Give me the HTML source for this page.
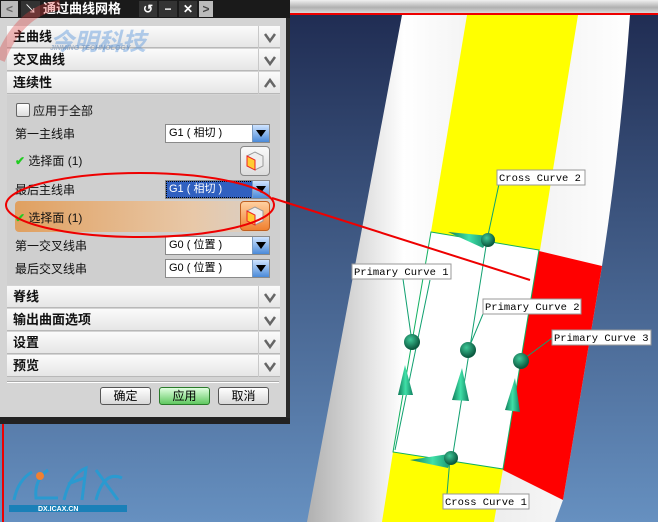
<!DOCTYPE html>
<html><head><meta charset="utf-8"><style>
*{margin:0;padding:0;box-sizing:border-box}
body{width:658px;height:522px;overflow:hidden;position:relative;font-family:"Liberation Sans","Noto Sans CJK SC",sans-serif;font-size:12px;background:#2a3a66}
.abs{position:absolute}
.hdr{position:absolute;left:7px;width:273px;height:22px;background:linear-gradient(#fbfbfb,#e6e6e6);border-bottom:1px solid #b8b8b8;font-weight:bold;font-size:13px;line-height:22px;padding-left:6px;color:#111}
.hdr .chev{position:absolute;right:0;top:0;width:22px;height:22px;border-left:1px solid #c8c8c8}
.lbl{position:absolute;left:15px;font-size:12px;color:#111}
.dd{position:absolute;left:165px;width:105px;height:19px;background:#fff;border:1px solid #8a8a8a;font-size:11px;line-height:17px;padding-left:3px}
.dd .ar{position:absolute;right:0;top:0;width:17px;height:17px;background:linear-gradient(#cfe4ff,#4a8ad8);border-left:1px solid #7a9ac0}
.dd .ar:after{content:"";position:absolute;left:3px;top:5px;border-left:5px solid transparent;border-right:5px solid transparent;border-top:7px solid #000}
.ib{position:absolute;left:240px;width:30px;height:30px;border:1px solid #888;border-radius:4px;background:linear-gradient(#fafafa,#dcdcdc)}
.btn{position:absolute;top:387px;width:51px;height:18px;border:1px solid #555;border-radius:3px;background:linear-gradient(#fff,#d8d8d8);text-align:center;line-height:16px;font-size:12px}
</style></head><body>
<svg class="abs" style="left:0;top:0" width="658" height="522">
<defs>
<linearGradient id="bg" x1="0" y1="0" x2="0" y2="1"><stop offset="0" stop-color="#1e2a50"/><stop offset="1" stop-color="#6690c0"/></linearGradient>
<linearGradient id="cyl" x1="0" y1="0" x2="1" y2="0"><stop offset="0" stop-color="#b0b0b0"/><stop offset=".3" stop-color="#fff"/><stop offset=".6" stop-color="#eee"/><stop offset="1" stop-color="#fff"/></linearGradient>
<linearGradient id="top" x1="0" y1="0" x2="0" y2="1"><stop offset="0" stop-color="#f0f0f0"/><stop offset=".5" stop-color="#b0b0b0"/><stop offset="1" stop-color="#e8e8e8"/></linearGradient>
<radialGradient id="sp" cx=".4" cy=".35" r=".6"><stop offset="0" stop-color="#3fc898"/><stop offset="1" stop-color="#0b5a40"/></radialGradient>
<linearGradient id="cn" x1="0" y1="0" x2="1" y2="0"><stop offset="0" stop-color="#0e7a58"/><stop offset=".5" stop-color="#40e0a8"/><stop offset="1" stop-color="#108060"/></linearGradient>
</defs>
<rect width="658" height="522" fill="url(#bg)"/>
<path d="M402,15 L630,15 Q620,150 602,266 L563,500 L555,522 L307,522 Z" fill="url(#cyl)"/>
<path d="M467,15 L578,15 L540,250 L431,232 Z" fill="#ffff00"/>
<path d="M393,452 L503,469 L494,522 L382,522 Z" fill="#ffff00"/>
<path d="M539,251 L602,266 L563,500 L503,470 Z" fill="#ff0000"/>
<path d="M431,232 L539,250 L503,469 L393,452 Z" fill="#fff" stroke="#10b060" stroke-width="1"/>
<g stroke="#10a070" stroke-width="1" fill="none">
<line x1="430" y1="280" x2="395" y2="450"/><line x1="403" y1="279" x2="412" y2="342"/>
<line x1="487" y1="240" x2="452" y2="460"/><line x1="483" y1="314" x2="468" y2="350"/>
<line x1="552" y1="338" x2="521" y2="361"/><line x1="499" y1="184" x2="487" y2="240"/>
<line x1="450" y1="458" x2="447" y2="494"/>
</g>
<rect x="0" y="0" width="658" height="15" fill="url(#top)"/>
<rect x="0" y="13" width="658" height="2" fill="#e00"/>
<g fill="url(#cn)">
<path d="M448,232 L490,236 L483,248 Z"/><path d="M410,460 L455,453 L448,468 Z"/>
<path d="M405,365 L398,395 L413,395 Z"/><path d="M462,368 L452,400 L469,401 Z"/><path d="M515,378 L505,410 L520,412 Z"/>
</g>
<g fill="url(#sp)"><circle cx="412" cy="342" r="8"/><circle cx="468" cy="350" r="8"/><circle cx="521" cy="361" r="8"/><circle cx="488" cy="240" r="7"/><circle cx="451" cy="458" r="7"/></g>
<g font-family="Liberation Mono,monospace" font-size="10.5" fill="#000">
<rect x="497" y="170" width="88" height="15" fill="#fff" stroke="#999"/><text x="499" y="181">Cross Curve  2</text>
<rect x="352" y="264" width="99" height="15" fill="#fff" stroke="#999"/><text x="354" y="275">Primary Curve  1</text>
<rect x="483" y="299" width="98" height="15" fill="#fff" stroke="#999"/><text x="485" y="310">Primary Curve  2</text>
<rect x="552" y="330" width="99" height="15" fill="#fff" stroke="#999"/><text x="554" y="341">Primary Curve  3</text>
<rect x="443" y="494" width="86" height="15" fill="#fff" stroke="#999"/><text x="445" y="505">Cross Curve  1</text>
</g>
<rect x="2" y="424" width="2" height="98" fill="#e00"/>
<g stroke="#2a9ad0" stroke-width="3" fill="none"><path d="M14,500 Q18,480 32,472"/><path d="M48,470 Q34,480 36,498 L58,498"/><path d="M64,500 Q70,474 86,468 L82,500 M68,484 L84,478"/><path d="M96,500 Q104,470 122,478 M96,470 L118,500"/></g>
<circle cx="40" cy="476" r="4" fill="#f08030"/>
<rect x="9" y="505" width="118" height="7" fill="#1a80b8"/>
<text x="38" y="511" font-size="7" font-weight="bold" fill="#fff" font-family="Liberation Sans">DX.ICAX.CN</text>
</svg>
<!-- dialog -->
<div class="abs" style="left:0;top:0;width:290px;height:18px;background:#1a1a1a"></div>
<div class="abs" style="left:1px;top:1px;width:17px;height:16px;background:#bbb;color:#666;text-align:center;font-weight:bold;line-height:16px">&lt;</div>
<div class="abs" style="left:21px;top:1px;width:19px;height:16px;background:#333;color:#fff;text-align:center;line-height:16px">↘</div>
<div class="abs" style="left:43px;top:0;color:#fff;font-weight:bold;font-size:13px;line-height:17px">通过曲线网格</div>
<div class="abs" style="left:139px;top:1px;width:18px;height:16px;background:#333;color:#fff;text-align:center;line-height:16px;font-weight:bold">↺</div>
<div class="abs" style="left:159px;top:1px;width:18px;height:16px;background:#333;color:#fff;text-align:center;line-height:16px;font-weight:bold">−</div>
<div class="abs" style="left:179px;top:1px;width:18px;height:16px;background:#333;color:#fff;text-align:center;line-height:16px;font-weight:bold">✕</div>
<div class="abs" style="left:199px;top:1px;width:14px;height:16px;background:#bbb;color:#444;text-align:center;line-height:16px;font-weight:bold">&gt;</div>
<div class="abs" style="left:0;top:18px;width:290px;height:400px;background:#d4d4d4;border-right:4px solid #e8e8e8"></div>
<div class="abs" style="left:0;top:417px;width:290px;height:7px;background:#222"></div>
<div class="abs" style="left:286px;top:18px;width:4px;height:400px;background:#2a2a2a"></div>
<div class="hdr" style="top:26px">主曲线<div class="chev"><svg width="22" height="22"><path d="M6,8 L11,15 L16,8" fill="none" stroke="#666" stroke-width="2.5"/></svg></div></div>
<div class="hdr" style="top:49px">交叉曲线<div class="chev"><svg width="22" height="22"><path d="M6,8 L11,15 L16,8" fill="none" stroke="#666" stroke-width="2.5"/></svg></div></div>
<div class="hdr" style="top:72px">连续性<div class="chev"><svg width="22" height="22"><path d="M6,15 L11,8 L16,15" fill="none" stroke="#666" stroke-width="2.5"/></svg></div></div>
<div class="abs" style="left:7px;top:95px;width:273px;height:190px;background:#cfcfcf"></div>
<div class="abs" style="left:16px;top:103px;width:14px;height:14px;border:1px solid #666;background:linear-gradient(#fff,#ddd);border-radius:2px"></div>
<div class="lbl" style="left:33px;top:102px">应用于全部</div>
<div class="lbl" style="top:125px">第一主线串</div>
<div class="dd" style="top:124px">G1 ( 相切 )<div class="ar"></div></div>
<div class="lbl" style="top:152px"><span style="color:#2c2;font-weight:bold">✔</span> 选择面 (1)</div>
<div class="ib" style="top:146px"><svg width="28" height="28"><path d="M6,9 L14,5 L22,9 L22,19 L14,23 L6,19 Z" fill="#eee" stroke="#999"/><path d="M6,9 L14,13 L14,23 L6,19Z" fill="#fc3" stroke="#e22"/></svg></div>
<div class="lbl" style="top:181px">最后主线串</div>
<div class="dd" style="top:180px;background:#3060c0;color:#fff;outline:1px dotted #000;outline-offset:-2px">G1 ( 相切 )<div class="ar"></div></div>
<div class="abs" style="left:15px;top:201px;width:255px;height:31px;border-radius:4px;background:linear-gradient(90deg,#e0a060,#e8c8a8 70%,#d8d0c8)"></div>
<div class="lbl" style="top:209px"><span style="color:#2c2;font-weight:bold">✔</span> 选择面 (1)</div>
<div class="ib" style="top:201px;background:linear-gradient(#ffd0a0,#f08030);border-color:#c06020"><svg width="28" height="28"><path d="M6,9 L14,5 L22,9 L22,19 L14,23 L6,19 Z" fill="#eee" stroke="#999"/><path d="M6,9 L14,13 L14,23 L6,19Z" fill="#fc3" stroke="#e22"/></svg></div>
<div class="lbl" style="top:237px">第一交叉线串</div>
<div class="dd" style="top:236px">G0 ( 位置 )<div class="ar"></div></div>
<div class="lbl" style="top:260px">最后交叉线串</div>
<div class="dd" style="top:259px">G0 ( 位置 )<div class="ar"></div></div>
<div class="hdr" style="top:286px">脊线<div class="chev"><svg width="22" height="22"><path d="M6,8 L11,15 L16,8" fill="none" stroke="#666" stroke-width="2.5"/></svg></div></div>
<div class="hdr" style="top:309px">输出曲面选项<div class="chev"><svg width="22" height="22"><path d="M6,8 L11,15 L16,8" fill="none" stroke="#666" stroke-width="2.5"/></svg></div></div>
<div class="hdr" style="top:332px">设置<div class="chev"><svg width="22" height="22"><path d="M6,8 L11,15 L16,8" fill="none" stroke="#666" stroke-width="2.5"/></svg></div></div>
<div class="hdr" style="top:355px">预览<div class="chev"><svg width="22" height="22"><path d="M6,8 L11,15 L16,8" fill="none" stroke="#666" stroke-width="2.5"/></svg></div></div>
<div class="abs" style="left:7px;top:381px;width:272px;height:2px;background:#fff;border-top:1px solid #aaa"></div>
<div class="btn" style="left:100px">确定</div>
<div class="btn" style="left:159px;background:linear-gradient(#e0ffe0,#60c860);border-color:#2a7a2a">应用</div>
<div class="btn" style="left:218px">取消</div>
<div class="abs" style="left:50px;top:22px;font-size:24px;font-weight:bold;font-style:italic;color:rgba(90,150,220,.45)">今明科技</div>
<div class="abs" style="left:50px;top:45px;font-size:7px;font-weight:bold;font-style:italic;color:rgba(90,130,180,.5)">JINMING TECHNOLOGY</div>
<svg class="abs" style="left:0;top:0" width="658" height="522">
<path d="M0,60 Q20,10 60,5" fill="none" stroke="rgba(220,60,60,.35)" stroke-width="10"/>
<ellipse cx="140" cy="205" rx="134" ry="32" fill="none" stroke="#e00" stroke-width="2"/>
<line x1="272" y1="198" x2="530" y2="280" stroke="#e00" stroke-width="2"/>
</svg>
</body></html>
